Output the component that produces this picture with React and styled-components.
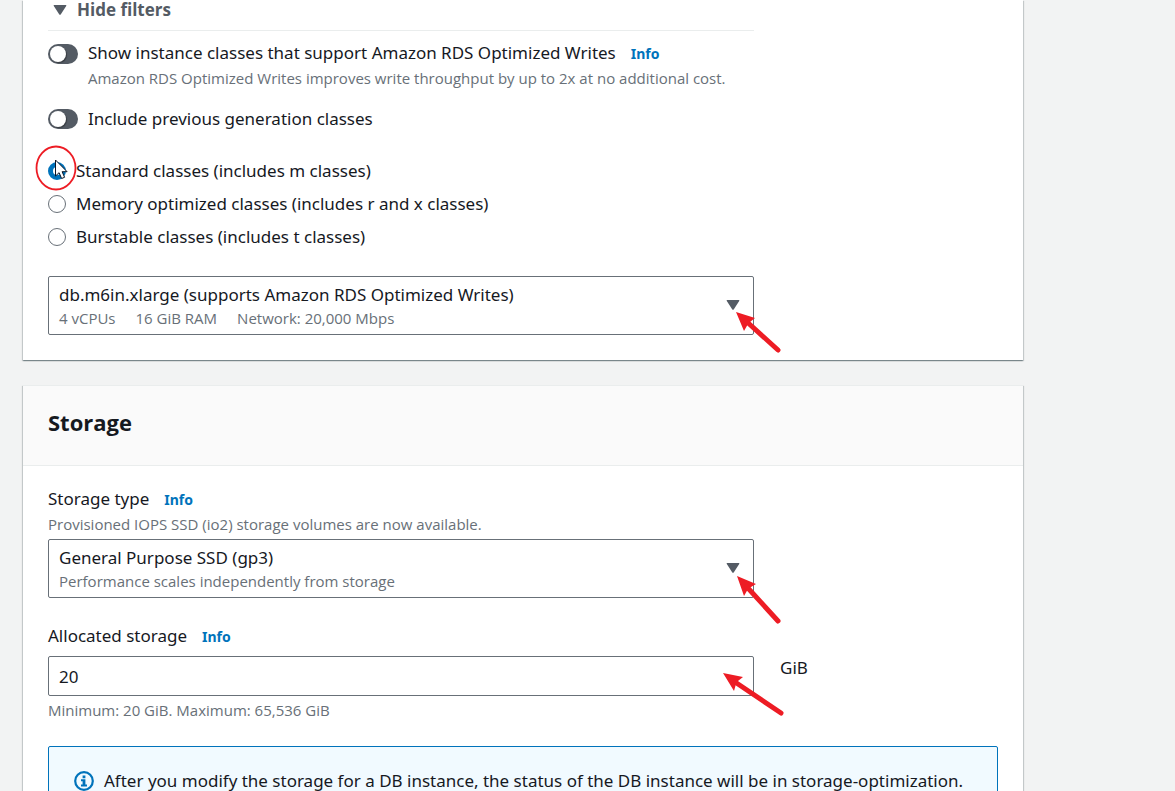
import React from "react";
import styled, { createGlobalStyle } from "styled-components";

const color = {
  text: "#16191f",
  muted: "#687078",
  dark: "#545b64",
  link: "#0073bb",
  line: "#eaeded",
  page: "#f2f3f3",
  mark: "#ed1c24",
};

const smallFont = `"Open Sans", "Noto Sans", sans-serif`;

const GlobalStyle = createGlobalStyle`
  *, *::before, *::after { box-sizing: border-box; }
  body {
    margin: 0;
    background: ${color.page};
    color: ${color.text};
    font-family: "Noto Sans", "Open Sans", sans-serif;
    font-size: 17px;
    line-height: 24px;
  }
`;

const Page = styled.main`
  display: flex;
  flex-direction: column;
  gap: 25px;
  padding: 0 152px 0 23px;
`;

const Panel = styled.section`
  background: #fff;
  border-top: ${(p) => (p.$continued ? "0" : `1px solid ${color.line}`)};
  box-shadow: 0 1px 1px 0 rgba(0, 28, 36, 0.3), 1px 1px 1px 0 rgba(0, 28, 36, 0.15),
    -1px 1px 1px 0 rgba(0, 28, 36, 0.15);
`;

const PanelHeader = styled.header`
  padding: 20px 25px 27px;
  background: #fafafa;
  border-bottom: 1px solid ${color.line};
`;

const PanelTitle = styled.h2`
  margin: 0;
  font-family: ${smallFont};
  font-size: 22px;
  line-height: 32px;
  font-weight: 700;
`;

const PanelBody = styled.div`
  padding: ${(p) => (p.$continued ? "0" : "21px")} 25px 25px;
`;

const Column = styled.div`
  width: 100%;
  max-width: 706px;
`;

const FilterToggle = styled.button`
  display: flex;
  align-items: center;
  gap: 10px;
  width: 100%;
  height: 31px;
  padding: 0 0 10px 5px;
  border: 0;
  border-bottom: 1px solid ${color.line};
  background: none;
  color: ${color.dark};
  font-family: ${smallFont};
  font-size: 17px;
  line-height: 24px;
  font-weight: 700;
`;

const Caret = styled.svg`
  width: 14px;
  height: 12px;
  fill: ${color.dark};
`;

const SwitchRow = styled.div`
  display: grid;
  grid-template-columns: 30px 1fr;
  column-gap: 10px;
  align-items: center;
  margin-top: ${(p) => p.$top};
`;

const Switch = styled.input`
  appearance: none;
  width: 30px;
  height: 20px;
  margin: 0;
  padding: 2px;
  border-radius: 10px;
  background: ${color.dark};

  &::before {
    content: "";
    display: block;
    width: 16px;
    height: 16px;
    border-radius: 50%;
    background: #fff;
    box-shadow: 1px 1px 1px rgba(0, 0, 0, 0.35);
  }
  &:checked {
    background: ${color.link};
  }
  &:checked::before {
    margin-left: 10px;
  }
`;

const LabelLine = styled.div`
  display: flex;
  align-items: baseline;
  gap: 15px;
`;

const InfoLink = styled.a`
  color: ${color.link};
  font-size: 14px;
  font-weight: 700;
  text-decoration: none;
`;

const Hint = styled.div`
  color: ${color.muted};
  font-family: ${smallFont};
  font-size: 15px;
  line-height: 24px;
  margin-top: ${(p) => p.$top || "0"};
  ${(p) => p.$indent && "grid-column: 2;"}
`;

const RadioGroup = styled.div`
  display: flex;
  flex-direction: column;
  gap: 9px;
  padding: 28px 0 27px;
`;

const RadioRow = styled.div`
  position: relative;
  display: flex;
  align-items: center;
  gap: 10px;
`;

const Radio = styled.input`
  appearance: none;
  width: 18px;
  height: 18px;
  margin: 0;
  border: 1px solid ${color.muted};
  border-radius: 50%;
  background: #fff;

  &:checked {
    border: 5px solid ${color.link};
  }
`;

const ClickMark = styled.svg`
  position: absolute;
  left: -14px;
  top: -15px;
  width: 44px;
  height: 48px;
  pointer-events: none;
`;

const SelectBox = styled.div`
  position: relative;
  display: grid;
  margin-top: ${(p) => p.$top || "0"};
`;

const Select = styled.select`
  grid-area: 1 / 1;
  appearance: none;
  width: 100%;
  height: 59px;
  padding: 0 40px 22px 10px;
  border: 1px solid ${color.muted};
  border-radius: 2px;
  background: #fff;
  color: ${color.text};
  font: inherit;
`;

const SelectDetails = styled.div`
  grid-area: 1 / 1;
  align-self: end;
  display: flex;
  gap: 20px;
  padding: 0 11px 5px;
  color: ${color.muted};
  font-family: ${smallFont};
  font-size: 15px;
  line-height: 24px;
  pointer-events: none;
`;

const SelectCaret = styled(Caret)`
  grid-area: 1 / 1;
  align-self: center;
  justify-self: end;
  margin: 0 14px 2px 0;
  pointer-events: none;
`;

const Arrow = styled.svg`
  position: absolute;
  right: ${(p) => p.$right};
  top: ${(p) => p.$top};
  width: 64px;
  height: 50px;
  pointer-events: none;
`;

const Field = styled.div`
  margin-top: ${(p) => p.$top || "0"};
`;

const InputRow = styled.div`
  display: grid;
  grid-template-columns: minmax(0, 706px) auto;
  justify-content: start;
  gap: 26px;
  margin-top: 7px;
`;

const InputWrap = styled.div`
  position: relative;
`;

const TextInput = styled.input`
  display: block;
  width: 100%;
  height: 40px;
  padding: 0 10px;
  border: 1px solid ${color.muted};
  border-radius: 2px;
  background: #fff;
  color: ${color.text};
  font: inherit;
`;

const Alert = styled.div`
  display: flex;
  align-items: center;
  gap: 10px;
  margin-top: 24px;
  padding: 22px 25px;
  border: 1px solid ${color.link};
  border-radius: 2px;
  background: #f1faff;
`;

const InfoIcon = styled.svg`
  flex: none;
  width: 20px;
  height: 20px;
`;

function CaretShape({ as: Shape = Caret }) {
  return (
    <Shape viewBox="0 0 14 12" aria-hidden="true">
      <path d="M1.3 1h11.4c.6 0 .8.6.5 1L7.7 10.4c-.4.5-1 .5-1.4 0L.8 2c-.3-.4-.1-1 .5-1Z" />
    </Shape>
  );
}

function RedArrow({ right, top, head, from, to }) {
  return (
    <Arrow $right={right} $top={top} viewBox="0 0 64 50" aria-hidden="true">
      <path d={head} fill={color.mark} />
      <path
        d={`M${from} L${to}`}
        stroke={color.mark}
        strokeWidth="5"
        strokeLinecap="round"
      />
    </Arrow>
  );
}

const classes = [
  ["standard", "Standard classes (includes m classes)"],
  ["memory", "Memory optimized classes (includes r and x classes)"],
  ["burstable", "Burstable classes (includes t classes)"],
];

export default function App() {
  return (
    <>
      <GlobalStyle />
      <Page>
        <Panel $continued>
          <PanelBody $continued>
            <Column>
              <FilterToggle type="button" aria-expanded="true">
                <CaretShape />
                Hide filters
              </FilterToggle>

              <SwitchRow $top="10px">
                <Switch type="checkbox" role="switch" id="writes" />
                <LabelLine>
                  <label htmlFor="writes">
                    Show instance classes that support Amazon RDS Optimized Writes
                  </label>
                  <InfoLink href="#writes-info">Info</InfoLink>
                </LabelLine>
                <Hint $indent>
                  Amazon RDS Optimized Writes improves write throughput by up to 2x at no
                  additional cost.
                </Hint>
              </SwitchRow>

              <SwitchRow $top="17px">
                <Switch type="checkbox" role="switch" id="previous" />
                <label htmlFor="previous">Include previous generation classes</label>
              </SwitchRow>

              <RadioGroup role="radiogroup" aria-label="Instance class family">
                {classes.map(([id, label], i) => (
                  <RadioRow key={id}>
                    <Radio type="radio" name="family" id={id} defaultChecked={i === 0} />
                    <label htmlFor={id}>{label}</label>
                    {i === 0 && (
                      <ClickMark viewBox="0 0 44 48" aria-hidden="true">
                        <ellipse
                          cx="22"
                          cy="24"
                          rx="19.5"
                          ry="21.5"
                          fill="none"
                          stroke={color.mark}
                          strokeWidth="1.8"
                        />
                        <path
                          d="M21.5 16v16l3.6-3.3 2.5 5.8 3-1.2-2.5-5.6h5Z"
                          fill="#fff"
                          stroke="#0b1526"
                          strokeWidth="1"
                        />
                      </ClickMark>
                    )}
                  </RadioRow>
                ))}
              </RadioGroup>

              <SelectBox>
                <Select aria-label="DB instance class">
                  <option>db.m6in.xlarge (supports Amazon RDS Optimized Writes)</option>
                </Select>
                <SelectDetails>
                  <span>4 vCPUs</span>
                  <span>16 GiB RAM</span>
                  <span>Network: 20,000 Mbps</span>
                </SelectDetails>
                <CaretShape as={SelectCaret} />
                <RedArrow
                  right="-46px"
                  top="36px"
                  head="M0 0 19 6 14 10 12 12 8 19Z"
                  from="10 9"
                  to="42 38"
                />
              </SelectBox>
            </Column>
          </PanelBody>
        </Panel>

        <Panel>
          <PanelHeader>
            <PanelTitle>Storage</PanelTitle>
          </PanelHeader>
          <PanelBody>
            <Column>
              <Field>
                <LabelLine>
                  <label htmlFor="type">Storage type</label>
                  <InfoLink href="#type-info">Info</InfoLink>
                </LabelLine>
                <Hint>Provisioned IOPS SSD (io2) storage volumes are now available.</Hint>
                <SelectBox $top="3px">
                  <Select id="type">
                    <option>General Purpose SSD (gp3)</option>
                  </Select>
                  <SelectDetails>
                    <span>Performance scales independently from storage</span>
                  </SelectDetails>
                  <CaretShape as={SelectCaret} />
                  <RedArrow
                    right="-47px"
                    top="37px"
                    head="M0 0 19 8 14 11 11 13 7 20Z"
                    from="10 11"
                    to="41 45"
                  />
                </SelectBox>
              </Field>
            </Column>

            <Field $top="26px">
              <LabelLine>
                <label htmlFor="allocated">Allocated storage</label>
                <InfoLink href="#allocated-info">Info</InfoLink>
              </LabelLine>
              <InputRow>
                <InputWrap>
                  <TextInput id="allocated" type="text" inputMode="numeric" defaultValue="20" />
                  <RedArrow
                    right="-33px"
                    top="17px"
                    head="M0 0 20 4 15 8 13 11 11 18Z"
                    from="12 9"
                    to="58 40"
                  />
                </InputWrap>
                <span>GiB</span>
              </InputRow>
              <Hint $top="2px">Minimum: 20 GiB. Maximum: 65,536 GiB</Hint>
            </Field>

            <Alert role="status">
              <InfoIcon viewBox="0 0 20 20" aria-hidden="true">
                <circle cx="10" cy="10" r="8.8" fill="none" stroke={color.link} strokeWidth="2.2" />
                <path
                  d="M8.6 4.6h2.8v2.6H8.6ZM7 8.2h4.4v5.2H13v2H7v-2h1.6v-3.2H7Z"
                  fill={color.link}
                />
              </InfoIcon>
              <span>
                After you modify the storage for a DB instance, the status of the DB instance
                will be in storage-optimization.
              </span>
            </Alert>
          </PanelBody>
        </Panel>
      </Page>
    </>
  );
}
